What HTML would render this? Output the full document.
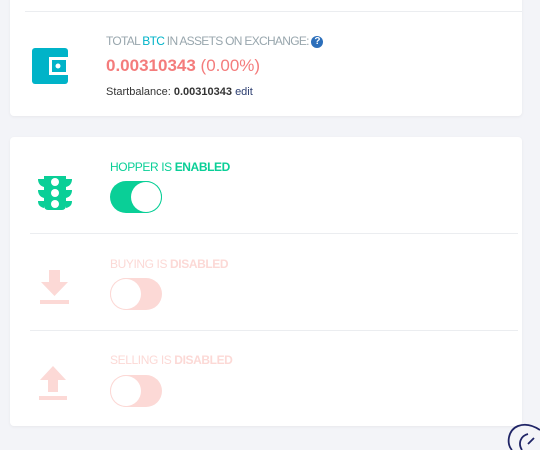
<!DOCTYPE html>
<html><head><meta charset="utf-8"><style>
*{margin:0;padding:0;box-sizing:border-box}
body{width:540px;height:446px;background:#f3f4f8;font-family:"Liberation Sans",sans-serif;position:relative;overflow:hidden}
.card{position:absolute;left:10px;width:512px;background:#fff;border-radius:4px;box-shadow:0 1px 3px rgba(0,0,0,.05)}
.abs{position:absolute}
.lbl{font-size:12px;letter-spacing:-0.4px;white-space:nowrap}
.tog{position:absolute;width:52px;height:32px;border-radius:16px}
.knob{position:absolute;top:1px;width:30px;height:30px;border-radius:50%;background:#fff}
</style></head><body>
<div class="card" style="top:-4px;height:120px;">
  <div class="abs" style="left:15px;top:15px;width:497px;height:1px;background:#ebedf0"></div>
  <svg class="abs" style="left:22px;top:52px" width="36" height="36" viewBox="0 0 36 36">
    <rect x="0" y="0" width="36" height="36" rx="3" fill="#00b3c8"/>
    <rect x="17" y="9" width="19" height="18" fill="#fff"/>
    <rect x="20" y="12" width="14" height="12" fill="#00b3c8"/>
    <circle cx="26" cy="18" r="2.5" fill="#fff"/>
  </svg>
  <div class="abs lbl" style="left:96px;top:38px;color:#98a6ad;letter-spacing:-0.7px">TOTAL <span style="color:#00b3c8">BTC</span> IN ASSETS ON EXCHANGE: <span style="display:inline-block;width:12px;height:12px;border-radius:50%;background:#2c6fbb;color:#fff;font-size:10px;font-weight:bold;text-align:center;line-height:12px;vertical-align:1px;letter-spacing:0">?</span></div>
  <div class="abs" style="left:96px;top:60px;font-size:17px;color:#f47c7c;white-space:nowrap"><b>0.00310343</b> (0.00%)</div>
  <div class="abs" style="left:96px;top:90px;font-size:11px;color:#333;white-space:nowrap">Startbalance: <b>0.00310343</b> <span style="color:#2c3e70">edit</span></div>
</div>
<div class="card" style="top:137px;height:289px;">
  <div class="abs" style="left:20px;top:96px;width:488px;height:1px;background:#ebedf0"></div>
  <div class="abs" style="left:20px;top:193px;width:488px;height:1px;background:#ebedf0"></div>
  <svg class="abs" style="left:28px;top:39px" width="34" height="34" viewBox="0 0 34 34">
    <path d="M6 0h22v30a4 4 0 0 1-4 4H10a4 4 0 0 1-4-4z" fill="#0acf97"/>
    <path d="M0 3h6v8C2 10 0 7 0 3zM34 3h-6v8c4-1 6-4 6-8zM0 14h6v8C2 21 0 18 0 14zM34 14h-6v8c4-1 6-4 6-8zM0 25h6v7C2 31 0 29 0 25zM34 25h-6v7c4-1 6-3 6-7z" fill="#0acf97"/>
    <circle cx="17" cy="6" r="4" fill="#fff"/><circle cx="17" cy="17" r="4" fill="#fff"/><circle cx="17" cy="28" r="4" fill="#fff"/>
  </svg>
  <div class="abs lbl" style="left:100px;top:23px;color:#0acf97">HOPPER IS <b>ENABLED</b></div>
  <div class="tog" style="left:100px;top:44px;background:#0acf97"><div class="knob" style="left:21px;box-shadow:0 0 0 1px #0acf97"></div></div>

  <svg class="abs" style="left:30px;top:133px" width="29" height="34" viewBox="0 0 29 34">
    <path d="M9 0h11v12h8L14.5 26 1 12h8z" fill="#fcd9d6"/><rect x="0" y="30" width="29" height="4" fill="#fcd9d6"/>
  </svg>
  <div class="abs lbl" style="left:100px;top:120px;color:#fcd9d6">BUYING IS <b>DISABLED</b></div>
  <div class="tog" style="left:100px;top:141px;background:#fcd9d6"><div class="knob" style="left:1px;box-shadow:0 0 0 1px #fcd9d6"></div></div>

  <svg class="abs" style="left:29px;top:229px" width="28" height="34" viewBox="0 0 28 34">
    <path d="M14 0l13 14h-8v12H9V14H1z" fill="#fcd9d6"/><rect x="0" y="30" width="28" height="4" fill="#fcd9d6"/>
  </svg>
  <div class="abs lbl" style="left:100px;top:216px;color:#fcd9d6">SELLING IS <b>DISABLED</b></div>
  <div class="tog" style="left:100px;top:238px;background:#fcd9d6"><div class="knob" style="left:1px;box-shadow:0 0 0 1px #fcd9d6"></div></div>
</div>
<svg class="abs" style="left:504px;top:420px" width="40" height="30" viewBox="0 0 40 30">
  <path d="M8 30C2 24 4 10 14 6c8-3 16 0 22 4M18 30c-4-6-2-14 6-16M30 18l-6 6" fill="none" stroke="#1f2466" stroke-width="1.8"/>
</svg>
</body></html>
